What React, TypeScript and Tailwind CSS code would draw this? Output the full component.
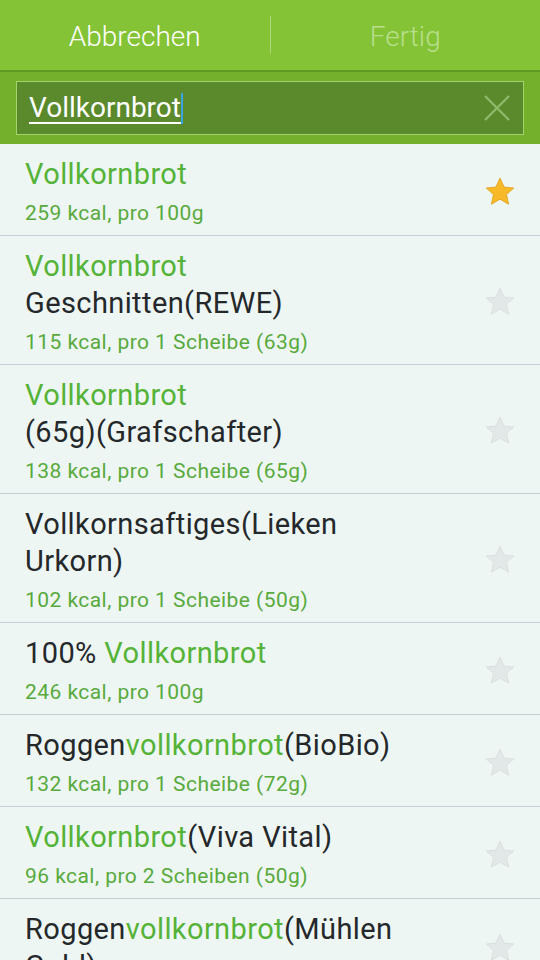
type Part = { t: string; hl?: boolean };
type Item = { lines: Part[][]; info: string; fav?: boolean };

const items: Item[] = [
  { lines: [[{ t: "Vollkornbrot", hl: true }]], info: "259 kcal, pro 100g", fav: true },
  {
    lines: [[{ t: "Vollkornbrot", hl: true }], [{ t: "Geschnitten(REWE)" }]],
    info: "115 kcal, pro 1 Scheibe (63g)",
  },
  {
    lines: [[{ t: "Vollkornbrot", hl: true }], [{ t: "(65g)(Grafschafter)" }]],
    info: "138 kcal, pro 1 Scheibe (65g)",
  },
  {
    lines: [[{ t: "Vollkornsaftiges(Lieken" }], [{ t: "Urkorn)" }]],
    info: "102 kcal, pro 1 Scheibe (50g)",
  },
  { lines: [[{ t: "100% " }, { t: "Vollkornbrot", hl: true }]], info: "246 kcal, pro 100g" },
  {
    lines: [[{ t: "Roggen" }, { t: "vollkornbrot", hl: true }, { t: "(BioBio)" }]],
    info: "132 kcal, pro 1 Scheibe (72g)",
  },
  {
    lines: [[{ t: "Vollkornbrot", hl: true }, { t: "(Viva Vital)" }]],
    info: "96 kcal, pro 2 Scheiben (50g)",
  },
  {
    lines: [[{ t: "Roggen" }, { t: "vollkornbrot", hl: true }, { t: "(Mühlen" }], [{ t: "Gold)" }]],
    info: "",
  },
];

function Star({ on }: { on?: boolean }) {
  return (
    <svg width="34" height="34" viewBox="0 0 24 24">
      <path
        d="M12 2.2l2.9 6.3 6.8.7-5.1 4.6 1.5 6.8L12 17.1l-6.1 3.5 1.5-6.8-5.1-4.6 6.8-.7z"
        fill={on ? "#f7b928" : "#e2e8e8"}
        stroke={on ? "#e0a21c" : "#d6dddd"}
        strokeWidth="0.6"
        strokeLinejoin="round"
      />
    </svg>
  );
}

export default function App() {
  return (
    <div className="w-[540px] h-[960px] overflow-hidden bg-[#eef6f4] font-['Roboto',sans-serif]">
      {/* action bar */}
      <div className="h-[70px] bg-[#83c335] flex items-center pt-[3px]">
        <div className="flex-1 text-center text-[28px] font-light text-white">Abbrechen</div>
        <div className="w-px h-[38px] bg-[#a9d677] -mt-[3px]" />
        <div className="flex-1 text-center text-[28px] font-light text-[#b9df8d]">Fertig</div>
      </div>
      <div className="h-[2px] bg-[#5f9a26]" />

      {/* search */}
      <div className="h-[72px] bg-[#74b02c] px-4 pt-[9px]">
        <div className="h-[54px] bg-[#5a8a2b] border border-[#a3d56c] flex items-center pl-3 pr-3">
          <span className="text-[28px] text-white underline underline-offset-[5px] decoration-2">Vollkornbrot</span>
          <span className="w-[2px] h-[31px] bg-[#3aa3e0]" />
          <div className="flex-1" />
          <svg width="28" height="28" viewBox="0 0 28 28">
            <path d="M2 2L26 26M26 2L2 26" stroke="#8fb969" strokeWidth="2.4" />
          </svg>
        </div>
      </div>

      {/* results */}
      <div>
        {items.map((it, i) => (
          <div key={i} className="flex items-center border-b border-[#c5d0d6] pl-[25px] pr-[23px] pt-3 pb-2">
            <div className="flex-1">
              {it.lines.map((ln, j) => (
                <div key={j} className="text-[29px] leading-[37px] tracking-[0.4px] text-[#24282a]">
                  {ln.map((p, k) => (
                    <span key={k} className={p.hl ? "text-[#55b338]" : ""}>
                      {p.t}
                    </span>
                  ))}
                </div>
              ))}
              {it.info && (
                <div className="mt-[6px] text-[21px] leading-[28px] tracking-[0.45px] text-[#58aa3d]">{it.info}</div>
              )}
            </div>
            <Star on={it.fav} />
          </div>
        ))}
      </div>
    </div>
  );
}
